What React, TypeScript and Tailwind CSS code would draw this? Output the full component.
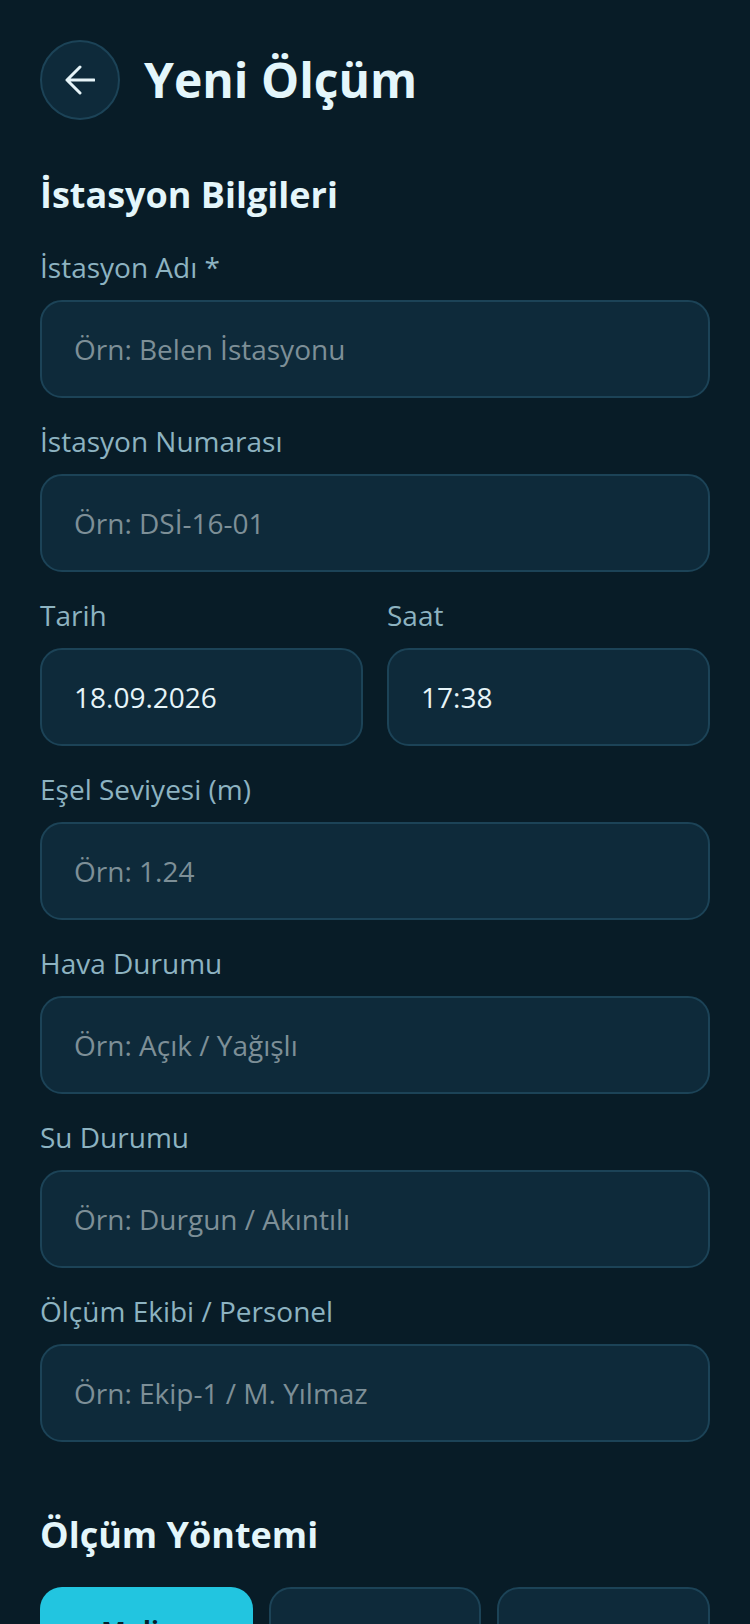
import React from 'react';

const fields = [
  { label: 'İstasyon Adı *', placeholder: 'Örn: Belen İstasyonu' },
  { label: 'İstasyon Numarası', placeholder: 'Örn: DSİ-16-01' },
];

const moreFields = [
  { label: 'Eşel Seviyesi (m)', placeholder: 'Örn: 1.24' },
  { label: 'Hava Durumu', placeholder: 'Örn: Açık / Yağışlı' },
  { label: 'Su Durumu', placeholder: 'Örn: Durgun / Akıntılı' },
  { label: 'Ölçüm Ekibi / Personel', placeholder: 'Örn: Ekip-1 / M. Yılmaz' },
];

const inputCls =
  'w-full h-[98px] rounded-[22px] border-2 border-[#1c4357] bg-[#0e2a3a] px-8 text-[28px] text-[#e6f4f8] placeholder:text-[#7d8f97] outline-none';

const Field = ({ label, placeholder, value }: { label: string; placeholder?: string; value?: string }) => (
  <div>
    <label className="block mb-4 text-[28px] leading-[34px] text-[#8db3c1]">{label}</label>
    <input className={inputCls} placeholder={placeholder} defaultValue={value} />
  </div>
);

const App = () => {
  return (
    <div
      className="h-[1624px] overflow-hidden bg-[#081c27] px-10 pt-10"
      style={{ fontFamily: '"Open Sans", "Noto Sans", sans-serif' }}
    >
      <div className="flex items-center gap-6 h-20">
        <button className="flex h-20 w-20 items-center justify-center rounded-full border-2 border-[#1c4357] bg-[#0e2a3a]">
          <svg width="30" height="30" viewBox="0 0 30 30" fill="none" stroke="#e6f4f8" strokeWidth="3" strokeLinecap="round" strokeLinejoin="round">
            <path d="M2 15H29M15 2L2 15L15 28" />
          </svg>
        </button>
        <h1 className="text-[48px] font-bold text-[#e4f6fb]">Yeni Ölçüm</h1>
      </div>

      <h2 className="mt-[51px] mb-[31px] text-[36px] leading-[48px] font-bold text-[#e4f6fb]">İstasyon Bilgileri</h2>

      <div className="flex flex-col gap-[26px]">
        {fields.map((f) => (
          <Field key={f.label} {...f} />
        ))}
        <div className="grid grid-cols-2 gap-6">
          <Field label="Tarih" value="18.09.2026" />
          <Field label="Saat" value="17:38" />
        </div>
        {moreFields.map((f) => (
          <Field key={f.label} {...f} />
        ))}
      </div>

      <h2 className="mt-[69px] mb-7 text-[36px] leading-[48px] font-bold text-[#e4f6fb]">Ölçüm Yöntemi</h2>

      <div className="grid grid-cols-3 gap-4">
        <button className="flex h-[96px] items-start justify-center pt-[25px] rounded-[22px] bg-[#22c5e0] text-[26px] leading-[39px] font-bold text-[#06202b]">Muline</button>
        <button className="flex h-[96px] items-start justify-center pt-[25px] rounded-[22px] border-2 border-[#1c4357] bg-[#0e2a3a] text-[26px] leading-[39px] font-bold text-[#e4f6fb]">ADCP</button>
        <button className="flex h-[96px] items-start justify-center pt-[25px] rounded-[22px] border-2 border-[#1c4357] bg-[#0e2a3a] text-[26px] leading-[39px] font-bold text-[#e4f6fb]">Kova</button>
      </div>
    </div>
  );
};

export default App;
